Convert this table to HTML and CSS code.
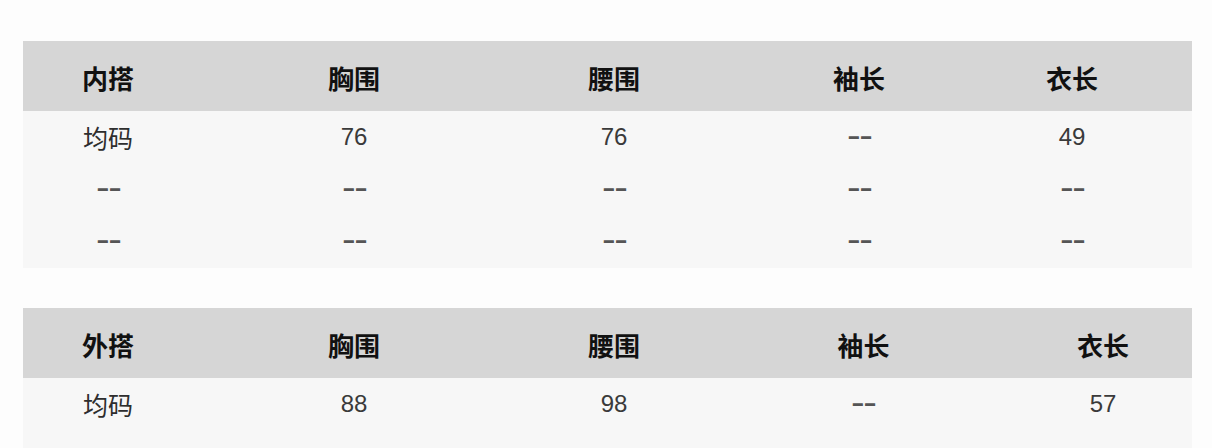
FILE: index.html
```html
<!DOCTYPE html>
<html lang="zh">
<head>
<meta charset="utf-8">
<title>尺码表</title>
<link rel="stylesheet" href="styles.css">
</head>
<body>
<div class="page">
  <div class="size-table t1">
    <div class="row head">
      <div class="cell">内搭</div>
      <div class="cell">胸围</div>
      <div class="cell">腰围</div>
      <div class="cell">袖长</div>
      <div class="cell">衣长</div>
    </div>
    <div class="body">
      <div class="row">
        <div class="cell">均码</div>
        <div class="cell num">76</div>
        <div class="cell num">76</div>
        <div class="cell"><span class="dash">--</span></div>
        <div class="cell num">49</div>
      </div>
      <div class="row">
        <div class="cell"><span class="dash">--</span></div>
        <div class="cell"><span class="dash">--</span></div>
        <div class="cell"><span class="dash">--</span></div>
        <div class="cell"><span class="dash">--</span></div>
        <div class="cell"><span class="dash">--</span></div>
      </div>
      <div class="row">
        <div class="cell"><span class="dash">--</span></div>
        <div class="cell"><span class="dash">--</span></div>
        <div class="cell"><span class="dash">--</span></div>
        <div class="cell"><span class="dash">--</span></div>
        <div class="cell"><span class="dash">--</span></div>
      </div>
    </div>
  </div>
  <div class="size-table t2">
    <div class="row head">
      <div class="cell">外搭</div>
      <div class="cell">胸围</div>
      <div class="cell">腰围</div>
      <div class="cell">袖长</div>
      <div class="cell">衣长</div>
    </div>
    <div class="body">
      <div class="row">
        <div class="cell">均码</div>
        <div class="cell num">88</div>
        <div class="cell num">98</div>
        <div class="cell"><span class="dash">--</span></div>
        <div class="cell num">57</div>
      </div>
      <div class="row">
        <div class="cell"></div>
      </div>
    </div>
  </div>
</div>
</body>
</html>
```

FILE: styles.css
```css
html, body {
  margin: 0;
  padding: 0;
  background: #fdfdfd;
}
body {
  font-family: "Noto Sans CJK SC", "Liberation Sans", sans-serif;
  color: #333;
  overflow: hidden;
}
.page {
  padding: 41px 20px 0 23px;
  display: flex;
  flex-direction: column;
  gap: 40px;
}
.size-table {
  width: 1169px;
}
.row {
  display: grid;
  box-sizing: border-box;
  height: 52px;
  align-items: center;
}
.t1 .row {
  grid-template-columns: 170px 322px 198px 292px 134px 1fr;
}
.t2 .row {
  grid-template-columns: 170px 322px 198px 301px 1fr;
}
.row.head {
  height: 70px;
  padding-top: 4px;
  background: #d6d6d6;
}
.body {
  background: #f7f7f7;
  padding-bottom: 1px;
}
.cell {
  text-align: center;
  font-size: 25px;
  line-height: 1;
  white-space: nowrap;
  color: #2e2e2e;
}
.head .cell {
  font-size: 26px;
  font-weight: 700;
  color: #111;
}
.num {
  font-family: "Liberation Sans", sans-serif;
  font-size: 24px;
  color: #3a3a3a;
}
.dash {
  display: inline-block;
  font-family: "Liberation Sans", sans-serif;
  font-size: 24px;
  font-weight: 700;
  color: #555;
  letter-spacing: -0.5px;
  transform: translateY(-3px) scaleX(1.65);
}
```
